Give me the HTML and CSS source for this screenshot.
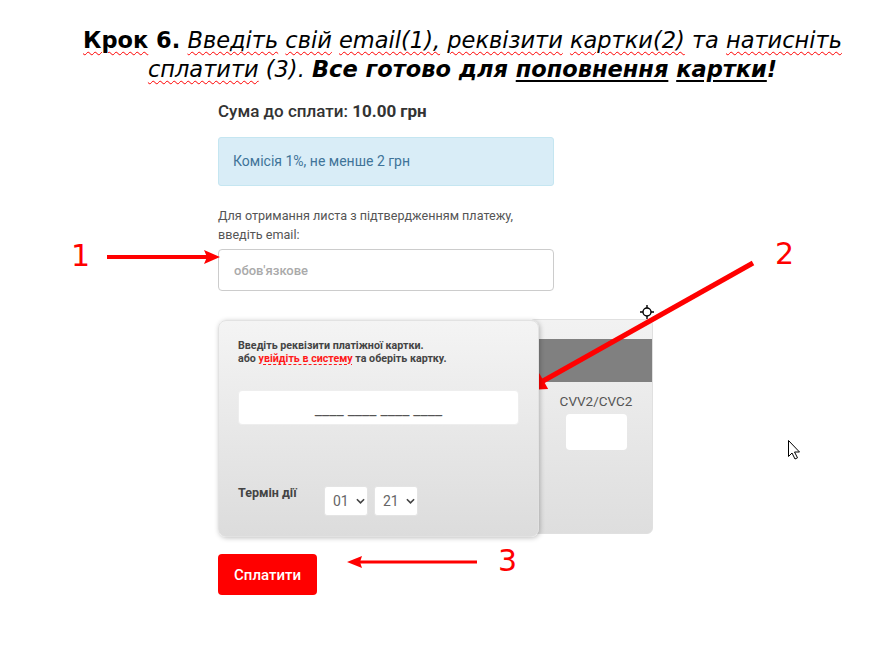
FILE: index.html
```html
<!DOCTYPE html>
<html>
<head>
    <title>Крок 6</title>
    <meta charset="utf-8" />
    <link rel="stylesheet" href="styles.css">
</head>
<body>
    <h1 class="step-title">
        <b><span class="typo">Крок</span> 6.</b>
        <i><span class="typo">Введіть</span> <span class="typo">свій</span> <span class="typo">email(1),</span> <span class="typo">реквізити</span> <span class="typo">картки(2)</span> та <span class="typo">натисніть</span><br />
        <span class="typo">сплатити</span> (3).</i>
        <b><i>Все готово для <u class="typo">поповнення</u> <u class="typo">картки</u>!</i></b>
    </h1>

    <div class="pay-form">
        <div class="txt-sum">Сума до сплати: <b>10.00 грн</b></div>
        <div class="alert-info">Комісія 1%, не менше 2 грн</div>
        <label class="lbl-email" for="inp_email">Для отримання листа з підтвердженням платежу, введіть email:</label>
        <input id="inp_email" class="inp-email" type="text" placeholder="обов'язкове" />

        <div class="cards">
            <div class="card-front">
                <p class="card-hint">
                    Введіть реквізити платіжної картки.<br />
                    або <a href="#" class="link-login">увійдіть в систему</a> та оберіть картку.
                </p>
                <input class="inp-number" type="text" placeholder="____ ____ ____ ____" />
                <div class="expiry">
                    <span class="lbl-expiry">Термін дії</span>
                    <span class="sel">01 <svg viewBox="0 0 10 6" width="9" height="6"><path d="M1 1l4 4 4-4" fill="none" stroke="#444" stroke-width="1.8"/></svg></span>
                    <span class="sel">21 <svg viewBox="0 0 10 6" width="9" height="6"><path d="M1 1l4 4 4-4" fill="none" stroke="#444" stroke-width="1.8"/></svg></span>
                </div>
            </div>
            <div class="card-back">
                <div class="stripe"></div>
                <div class="lbl-cvv">CVV2/CVC2</div>
                <div class="inp-cvv"></div>
            </div>
        </div>

        <button class="btn-pay">Сплатити</button>
    </div>

    <!-- pointers drawn over the form -->
    <span class="mark mark-1">1</span>
    <span class="mark mark-2">2</span>
    <span class="mark mark-3">3</span>
    <svg class="arrows" width="893" height="668" viewBox="0 0 893 668">
        <g stroke="#ff0000" stroke-width="4" fill="#ff0000">
            <line x1="107" y1="257" x2="208" y2="257" />
            <path d="M220 257 L204 250 L207 257 L204 264 Z" stroke="none" />
            <line x1="753" y1="263" x2="543" y2="381" stroke-width="5" />
            <path d="M528 390 L539.3 373.3 L548.1 388.9 Z" stroke="none" />
            <line x1="477" y1="562" x2="360" y2="562" stroke-width="3" />
            <path d="M347 562 L362 556 L360 562 L362 568 Z" stroke="none" />
        </g>
        <g fill="none" stroke="#000" stroke-width="1.4">
            <circle cx="647" cy="312" r="4" />
            <path d="M647 305v3M647 316v3M640 312h3M651 312h3" />
        </g>
        <path d="M788.5 440.5v16l3.5-3.5 3 6 2.5-1.2-3-5.8h5z" fill="#fff" stroke="#000" stroke-width="1" />
    </svg>
</body>
</html>
```
FILE: styles.css
```css
body {
    margin: 0;
    background: #fff;
    font-family: Roboto, "Liberation Sans", sans-serif;
    position: relative;
    width: 893px;
    height: 668px;
    overflow: hidden;
}
.step-title {
    margin: 0;
    padding: 26px 20px 0 52px;
    text-align: center;
    font-family: "DejaVu Sans", sans-serif;
    font-size: 22.5px;
    line-height: 29px;
    font-weight: normal;
    color: #000;
    white-space: nowrap;
}
.step-title b {
    font-weight: bold;
}
.typo {
    text-decoration: underline wavy #ff0000;
    text-decoration-thickness: 1px;
    text-underline-offset: 3px;
}
.step-title u.typo {
    text-decoration: underline solid #000;
    text-decoration-thickness: 2px;
    text-underline-offset: 3px;
}
.pay-form {
    width: 336px;
    margin: 0 0 0 218px;
    padding-top: 17px;
    color: #333;
}
.txt-sum {
    font-size: 17px;
    font-weight: 500;
    line-height: 20px;
}
.txt-sum b {
    font-weight: 700;
}
.alert-info {
    margin-top: 16px;
    height: 49px;
    box-sizing: border-box;
    padding: 15px 14px;
    font-size: 14px;
    font-weight: 400;
    line-height: 17px;
    color: #3f7499;
    background: #d9edf7;
    border: 1px solid #c5e6f1;
    border-radius: 3px;
}
.lbl-email {
    display: block;
    margin-top: 20px;
    font-size: 12.6px;
    line-height: 19px;
    color: #555;
}
.inp-email {
    display: block;
    width: 336px;
    height: 42px;
    box-sizing: border-box;
    margin-top: 5px;
    padding: 0 15px;
    border: 1px solid #ccc;
    border-radius: 4px;
    font-family: inherit;
    font-size: 13px;
}
.inp-email::placeholder {
    color: #aaa;
    font-weight: 500;
}
.cards {
    display: flex;
    width: 434px;
    margin-top: 29px;
}
.card-front {
    position: relative;
    z-index: 2;
    flex: 0 0 320px;
    height: 217px;
    box-sizing: border-box;
    padding: 18px 19px 0 19px;
    border: 1px solid #e2e2e2;
    border-radius: 8px;
    background: linear-gradient(#f4f4f4, #dcdcdc);
    box-shadow: 1px 1px 5px rgba(0, 0, 0, .25);
}
.card-hint {
    margin: 0;
    font-size: 10.7px;
    font-weight: 700;
    line-height: 13px;
    color: #444;
}
.link-login {
    color: #ff1a1a;
    text-decoration: underline dashed #ff1a1a;
    text-underline-offset: 2px;
}
.inp-number {
    display: block;
    width: 281px;
    height: 35px;
    box-sizing: border-box;
    margin-top: 25px;
    padding-top: 5px;
    border: 1px solid #eee;
    border-radius: 4px;
    background: #fff;
    text-align: center;
    font-family: inherit;
    font-size: 16px;
}
.inp-number::placeholder {
    color: #555;
}
.expiry {
    display: flex;
    align-items: flex-start;
    margin-top: 61px;
}
.lbl-expiry {
    width: 86px;
    font-size: 12.5px;
    font-weight: 700;
    line-height: 14px;
    color: #444;
}
.sel {
    display: flex;
    align-items: center;
    gap: 7px;
    width: 44px;
    height: 30px;
    box-sizing: border-box;
    margin-right: 6px;
    padding-left: 8px;
    background: #fff;
    border: 1px solid #e4e4e4;
    border-radius: 3px;
    font-size: 14px;
    color: #666;
}
.card-back {
    flex: 0 0 124px;
    margin-left: -10px;
    margin-top: -1px;
    height: 215px;
    box-sizing: border-box;
    padding-top: 19px;
    border: 1px solid #e0e0e0;
    border-radius: 6px;
    background: linear-gradient(#f2f2f2, #dedede);
    display: flex;
    flex-direction: column;
    align-items: center;
}
.stripe {
    align-self: stretch;
    height: 43px;
    background: #808080;
}
.lbl-cvv {
    margin-top: 11px;
    padding-left: 10px;
    font-size: 13.5px;
    line-height: 17px;
    color: #555;
}
.inp-cvv {
    margin-top: 4px;
    margin-left: 10px;
    width: 61px;
    height: 36px;
    background: #fff;
    border-radius: 4px;
}
.btn-pay {
    display: block;
    margin-top: 17px;
    width: 99px;
    height: 41px;
    border: 0;
    border-radius: 4px;
    background: #ff0000;
    color: #fff;
    font-family: inherit;
    font-size: 15px;
    font-weight: 500;
}
.mark {
    position: absolute;
    font-family: "DejaVu Sans", sans-serif;
    font-size: 30px;
    line-height: 30px;
    color: #ff0000;
}
.mark-1 { left: 71px; top: 241px; }
.mark-2 { left: 775px; top: 239px; }
.mark-3 { left: 498px; top: 546px; }
.arrows {
    position: absolute;
    left: 0;
    top: 0;
    pointer-events: none;
}
```
